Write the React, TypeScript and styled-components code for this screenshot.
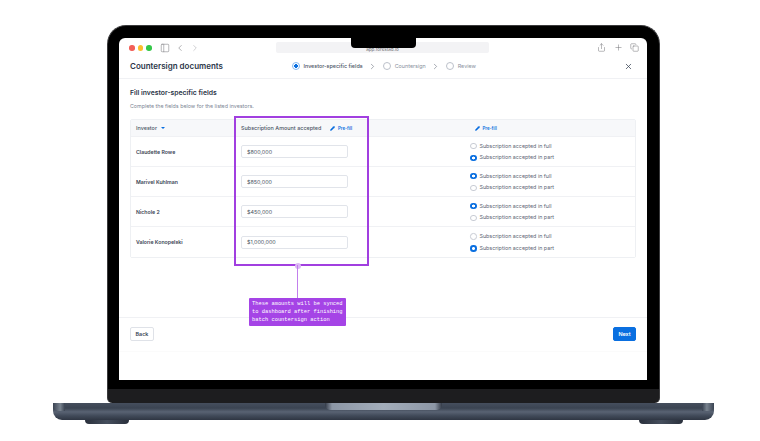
import React from "react";
import styled, { createGlobalStyle } from "styled-components";
import { ChevronLeft, ChevronRight, Plus, Share, X, PanelLeft, Copy, Pencil } from "lucide-react";

const Global = createGlobalStyle`
  html, body { margin: 0; padding: 0; background: #fff; }
  body { font-family: Inter, "Liberation Sans", sans-serif; color: #2b3648; }
  * { box-sizing: border-box; }
`;

const Page = styled.div`
  width: 760px;
  height: 441px;
  overflow: hidden;
  padding: 25px 0 0 7px;
  display: flex;
  flex-direction: column;
  align-items: center;
`;

const Lid = styled.div`
  position: relative;
  width: 553px;
  height: 378px;
  flex: none;
  background: linear-gradient(#000 0, #000 363px, #1d1d1f 363px);
  border: 1px solid #3a3a3c;
  border-bottom: none;
  border-radius: 19px 19px 5px 5px;
  padding: 12px 12px 0 11px;
`;

const Notch = styled.div`
  position: absolute;
  top: 12px;
  left: 243px;
  width: 65px;
  height: 10px;
  background: #000;
  border-radius: 0 0 4px 4px;
`;

const Screen = styled.div`
  width: 528px;
  height: 342px;
  background: #fff;
  border-radius: 6px 6px 0 0;
  display: flex;
  flex-direction: column;
  overflow: hidden;
`;

const BrowserBar = styled.div`
  height: 20px;
  padding: 4px 8px 0 10px;
  display: flex;
  align-items: flex-start;
`;

const Dots = styled.div`
  display: flex;
  gap: 3px;
  margin-top: 3px;
`;

const Dot = styled.span<{ $c: string }>`
  width: 5.5px;
  height: 5.5px;
  border-radius: 50%;
  background: ${(p) => p.$c};
`;

const NavIcons = styled.div`
  display: flex;
  align-items: center;
  color: #7a7a7e;
  margin-left: 8px;
  height: 11px;
  gap: 5px;
  width: 116.5px;
`;

const UrlBar = styled.div`
  width: 213px;
  height: 11px;
  background: #f3f3f5;
  border-radius: 2px;
  display: flex;
  justify-content: center;
  padding-top: 4.5px;
  font-size: 4.6px;
  line-height: 6px;
  color: #6d6d72;
`;

const BarActions = styled.div`
  margin-left: auto;
  display: flex;
  align-items: center;
  height: 11px;
  gap: 7.5px;
  color: #6d6d72;
`;

const DialogHeader = styled.header`
  height: 21px;
  padding: 0 14px 4px 11px;
  border-bottom: 1px solid #f0f1f4;
  display: flex;
  align-items: center;
`;

const Title = styled.h1`
  margin: 0;
  width: 162px;
  font-size: 8px;
  line-height: 12px;
  font-weight: 600;
  color: #2b3648;
`;

const Stepper = styled.div`
  display: flex;
  align-items: center;
`;

const StepDot = styled.span<{ $on?: boolean }>`
  width: 8px;
  height: 8px;
  border-radius: 50%;
  flex: none;
  background: ${(p) => (p.$on ? "radial-gradient(circle, #0a6fe0 1.6px, #fff 2.1px)" : "#fff")};
  border: 1px solid ${(p) => (p.$on ? "#86b8f0" : "#bcc1ca")};
`;

const StepLabel = styled.span<{ $on?: boolean }>`
  font-size: 5.4px;
  font-weight: ${(p) => (p.$on ? 500 : 400)};
  color: ${(p) => (p.$on ? "#4a5464" : "#8a92a0")};
  margin-left: ${(p) => (p.$on ? "3.5px" : "4px")};
  white-space: nowrap;
`;

const StepArrow = styled(ChevronRight)`
  color: #6c7482;
  margin: 0 5.5px;
  flex: none;
`;

const CloseBtn = styled(X)`
  margin-left: auto;
  color: #3a4454;
`;

const Body = styled.main`
  flex: 1;
  padding: 9px 11px 0;
  position: relative;
`;

const Heading = styled.h2`
  margin: 0;
  font-size: 6.8px;
  line-height: 9px;
  font-weight: 600;
  color: #2b3648;
`;

const Sub = styled.p`
  margin: 6px 0 0;
  font-size: 5.3px;
  line-height: 7px;
  color: #7c8594;
`;

const Table = styled.div`
  margin-top: 9px;
  border: 1px solid #eef0f3;
  border-radius: 2px;
`;

const Row = styled.div<{ $head?: boolean }>`
  display: grid;
  grid-template-columns: 105px 229px 1fr;
  align-items: center;
  height: ${(p) => (p.$head ? "17px" : "30px")};
  background: ${(p) => (p.$head ? "#f7f8fa" : "#fff")};
  border-bottom: 1px solid #f0f1f4;
  padding-left: 5px;
  &:last-child {
    border-bottom: none;
  }
`;

const HeadCell = styled.div`
  display: flex;
  align-items: center;
  font-size: 5.45px;
  font-weight: 500;
  color: #4a5464;
`;

const Caret = styled.span`
  width: 0;
  height: 0;
  margin-left: 4px;
  border-left: 2px solid transparent;
  border-right: 2px solid transparent;
  border-top: 2.5px solid #0a6fe0;
`;

const Prefill = styled.span<{ $gap: number }>`
  display: flex;
  align-items: center;
  gap: 3px;
  margin-left: ${(p) => p.$gap}px;
  color: #0a6fe0;
  font-size: 4.4px;
  font-weight: 600;
`;

const Name = styled.div`
  font-size: 5.2px;
  font-weight: 600;
  color: #3a4454;
`;

const AmountInput = styled.div`
  width: 107px;
  height: 13px;
  border: 1px solid #e1e4ea;
  border-radius: 2px;
  padding-left: 5px;
  display: flex;
  align-items: center;
  font-size: 5.4px;
  color: #4a5464;
  background: #fff;
`;

const Choices = styled.div`
  display: flex;
  flex-direction: column;
  gap: 4.6px;
  padding-top: 1px;
`;

const Choice = styled.div`
  display: flex;
  align-items: center;
  gap: 3px;
  font-size: 5.35px;
  line-height: 7px;
  color: #5c6574;
`;

const Radio = styled.span<{ $on?: boolean }>`
  width: 6.5px;
  height: 6.5px;
  border-radius: 50%;
  flex: none;
  background: ${(p) => (p.$on ? "radial-gradient(circle, #fff 1.2px, #0a6fe0 1.7px)" : "#fff")};
  border: ${(p) => (p.$on ? "none" : "0.7px solid #c8ccd4")};
`;

const Highlight = styled.div`
  position: absolute;
  left: 115px;
  top: 36.5px;
  width: 135px;
  height: 150px;
  border: 2.2px solid #a13fe0;
  pointer-events: none;
`;

const Pin = styled.span`
  position: absolute;
  left: 175.5px;
  top: 183.5px;
  width: 6px;
  height: 6px;
  border-radius: 50%;
  background: #dcb8f5;
`;

const Connector = styled.div`
  position: absolute;
  left: 178px;
  top: 186px;
  width: 1px;
  height: 33px;
  background: #c27fec;
`;

const Note = styled.div`
  position: absolute;
  left: 130px;
  top: 218.5px;
  width: 97px;
  height: 28px;
  background: #a544e6;
  border-radius: 1px;
  padding: 2px 0 0 3px;
  color: #fff;
  font-family: "Liberation Mono", monospace;
  font-size: 5.4px;
  line-height: 8.3px;
  white-space: pre;
  z-index: 2;
`;

const Footer = styled.footer`
  height: 34px;
  border-top: 1px solid #f0f1f4;
  padding: 9px 11px 0;
  display: flex;
  align-items: flex-start;
  justify-content: space-between;
`;

const Button = styled.button<{ $primary?: boolean }>`
  height: 14px;
  width: ${(p) => (p.$primary ? "23px" : "24px")};
  padding: 0;
  border-radius: 2px;
  border: 1px solid ${(p) => (p.$primary ? "#0a6fe0" : "#dfe2e8")};
  background: ${(p) => (p.$primary ? "#0a6fe0" : "#fff")};
  color: ${(p) => (p.$primary ? "#fff" : "#3a4454")};
  font-family: inherit;
  font-size: 5.4px;
  font-weight: 600;
`;

const Taskbar = styled.div`
  height: 29px;
  border-top: 1px solid #fbfbfb;
`;

const Base = styled.div`
  position: relative;
  width: 661px;
  height: 17px;
  flex: none;
  border-radius: 0 0 9px 9px;
  background: linear-gradient(#454e5d 0, #3b4452 30%, #596373 52%, #414a59 75%, #2f3643 100%);
  display: flex;
  justify-content: center;
`;

const Lip = styled.div`
  width: 117px;
  height: 7px;
  border-radius: 0 0 5px 5px;
  background: linear-gradient(90deg, #333a47, #8d97a6 6%, #a3adba 50%, #8d97a6 94%, #333a47);
`;

const Corner = styled.span<{ $side: "left" | "right" }>`
  position: absolute;
  top: 0;
  ${(p) => p.$side}: 0;
  width: 12px;
  height: 8px;
  background: linear-gradient(${(p) => (p.$side === "left" ? "90deg" : "270deg")}, #3a4352, #79838f 60%, #3a4352);
  border-radius: ${(p) => (p.$side === "left" ? "0 0 0 5px" : "0 0 5px 0")};
`;

const Foot = styled.span<{ $side: "left" | "right" }>`
  position: absolute;
  top: 17px;
  ${(p) => p.$side}: 31.5px;
  width: 44px;
  height: 3.5px;
  background: linear-gradient(90deg, #2a303c, #454e5d 50%, #2a303c);
  border-radius: 0 0 6px 6px;
`;

const investors = [
  { name: "Claudette Rowe", amount: "$800,000", full: false },
  { name: "Marivel Kuhlman", amount: "$850,000", full: true },
  { name: "Nichole 2", amount: "$450,000", full: true },
  { name: "Valorie Konopelski", amount: "$1,000,000", full: false },
];

export default function App() {
  return (
    <Page>
      <Global />
      <Lid>
        <Notch />
        <Screen>
          <BrowserBar>
            <Dots>
              <Dot $c="#f25f58" />
              <Dot $c="#fbbe2e" />
              <Dot $c="#34c748" />
            </Dots>
            <NavIcons>
              <PanelLeft size={10} strokeWidth={1.3} />
              <ChevronLeft size={10} strokeWidth={1.4} />
              <ChevronRight size={10} strokeWidth={1.4} color="#b0b0b4" />
            </NavIcons>
            <UrlBar>app.forestad.io</UrlBar>
            <BarActions>
              <Share size={9} strokeWidth={1.3} />
              <Plus size={9} strokeWidth={1.3} />
              <Copy size={9} strokeWidth={1.3} />
            </BarActions>
          </BrowserBar>
          <DialogHeader>
            <Title>Countersign documents</Title>
            <Stepper>
              <StepDot $on />
              <StepLabel $on>Investor-specific fields</StepLabel>
              <StepArrow size={9} strokeWidth={1.6} />
              <StepDot />
              <StepLabel>Countersign</StepLabel>
              <StepArrow size={9} strokeWidth={1.6} />
              <StepDot />
              <StepLabel>Review</StepLabel>
            </Stepper>
            <CloseBtn size={9} strokeWidth={2} />
          </DialogHeader>
          <Body>
            <Heading>Fill investor-specific fields</Heading>
            <Sub>Complete the fields below for the listed investors.</Sub>
            <Table>
              <Row $head>
                <HeadCell>
                  Investor
                  <Caret />
                </HeadCell>
                <HeadCell>
                  Subscription Amount accepted
                  <Prefill $gap={8.5}>
                    <Pencil size={5} strokeWidth={2.5} fill="currentColor" />
                    Pre-fill
                  </Prefill>
                </HeadCell>
                <HeadCell>
                  <Prefill $gap={4.5}>
                    <Pencil size={5} strokeWidth={2.5} fill="currentColor" />
                    Pre-fill
                  </Prefill>
                </HeadCell>
              </Row>
              {investors.map((inv) => (
                <Row key={inv.name}>
                  <Name>{inv.name}</Name>
                  <AmountInput>{inv.amount}</AmountInput>
                  <Choices>
                    <Choice>
                      <Radio $on={inv.full} />
                      Subscription accepted in full
                    </Choice>
                    <Choice>
                      <Radio $on={!inv.full} />
                      Subscription accepted in part
                    </Choice>
                  </Choices>
                </Row>
              ))}
            </Table>
            <Highlight />
            <Pin />
            <Connector />
            <Note>{"These amounts will be synced\nto dashboard after finishing\nbatch countersign action"}</Note>
          </Body>
          <Footer>
            <Button>Back</Button>
            <Button $primary>Next</Button>
          </Footer>
          <Taskbar />
        </Screen>
      </Lid>
      <Base>
        <Corner $side="left" />
        <Lip />
        <Corner $side="right" />
        <Foot $side="left" />
        <Foot $side="right" />
      </Base>
    </Page>
  );
}
